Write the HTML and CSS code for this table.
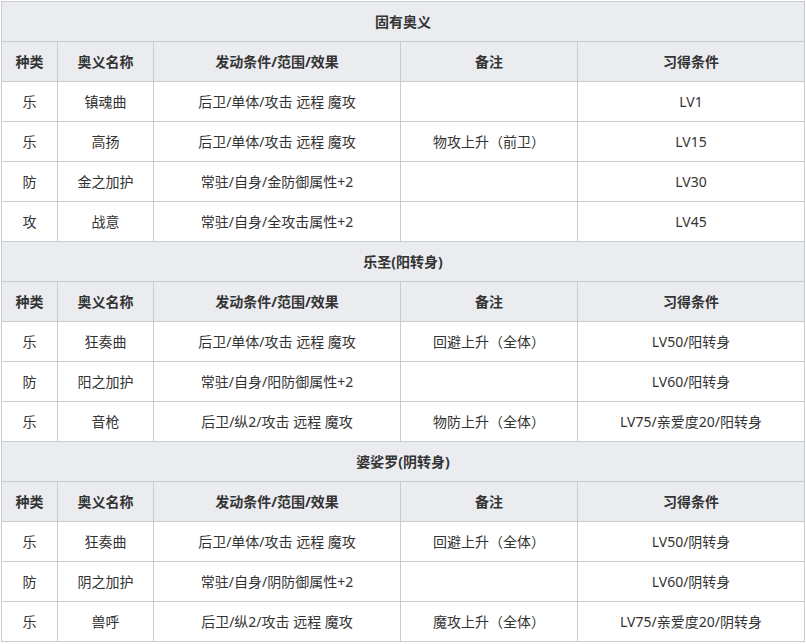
FILE: index.html
```html
<!DOCTYPE html>
<html lang="zh">
<head>
<meta charset="utf-8">
<link rel="stylesheet" href="styles.css">
</head>
<body>
<div class="wrap">
<table class="skills">
<colgroup>
<col class="c1"><col class="c2"><col class="c3"><col class="c4"><col class="c5">
</colgroup>
<tbody>
<tr><th colspan="5" class="title">固有奥义</th></tr>
<tr><th>种类</th><th>奥义名称</th><th>发动条件/范围/效果</th><th>备注</th><th>习得条件</th></tr>
<tr><td>乐</td><td>镇魂曲</td><td>后卫/单体/攻击 远程 魔攻</td><td></td><td>LV1</td></tr>
<tr><td>乐</td><td>高扬</td><td>后卫/单体/攻击 远程 魔攻</td><td>物攻上升（前卫）</td><td>LV15</td></tr>
<tr><td>防</td><td>金之加护</td><td>常驻/自身/金防御属性+2</td><td></td><td>LV30</td></tr>
<tr><td>攻</td><td>战意</td><td>常驻/自身/全攻击属性+2</td><td></td><td>LV45</td></tr>
<tr><th colspan="5" class="title">乐圣(阳转身)</th></tr>
<tr><th>种类</th><th>奥义名称</th><th>发动条件/范围/效果</th><th>备注</th><th>习得条件</th></tr>
<tr><td>乐</td><td>狂奏曲</td><td>后卫/单体/攻击 远程 魔攻</td><td>回避上升（全体）</td><td>LV50/阳转身</td></tr>
<tr><td>防</td><td>阳之加护</td><td>常驻/自身/阳防御属性+2</td><td></td><td>LV60/阳转身</td></tr>
<tr><td>乐</td><td>音枪</td><td>后卫/纵2/攻击 远程 魔攻</td><td>物防上升（全体）</td><td>LV75/亲爱度20/阳转身</td></tr>
<tr><th colspan="5" class="title">婆娑罗(阴转身)</th></tr>
<tr><th>种类</th><th>奥义名称</th><th>发动条件/范围/效果</th><th>备注</th><th>习得条件</th></tr>
<tr><td>乐</td><td>狂奏曲</td><td>后卫/单体/攻击 远程 魔攻</td><td>回避上升（全体）</td><td>LV50/阴转身</td></tr>
<tr><td>防</td><td>阴之加护</td><td>常驻/自身/阴防御属性+2</td><td></td><td>LV60/阴转身</td></tr>
<tr><td>乐</td><td>兽呼</td><td>后卫/纵2/攻击 远程 魔攻</td><td>魔攻上升（全体）</td><td>LV75/亲爱度20/阴转身</td></tr>
</tbody>
</table>
</div>
</body>
</html>
```

FILE: styles.css
```css
html, body {
  margin: 0;
  padding: 0;
  background: #ffffff;
}
.wrap {
  padding: 1px 0 0 1px;
}
.skills {
  border-collapse: collapse;
  table-layout: fixed;
  width: 803px;
  font-family: "Noto Sans", "Noto Sans CJK SC", sans-serif;
  font-size: 14px;
  color: #333333;
}
.c1 { width: 56px; }
.c2 { width: 96px; }
.c3 { width: 247px; }
.c4 { width: 177px; }
.c5 { width: 227px; }
.skills th, .skills td {
  border: 1px solid #c8ccd1;
  height: 39px;
  padding: 0;
  text-align: center;
  vertical-align: middle;
  line-height: 20px;
}
.skills th {
  background: #eaecf0;
  font-weight: bold;
}
.skills td {
  background: #ffffff;
}
```
